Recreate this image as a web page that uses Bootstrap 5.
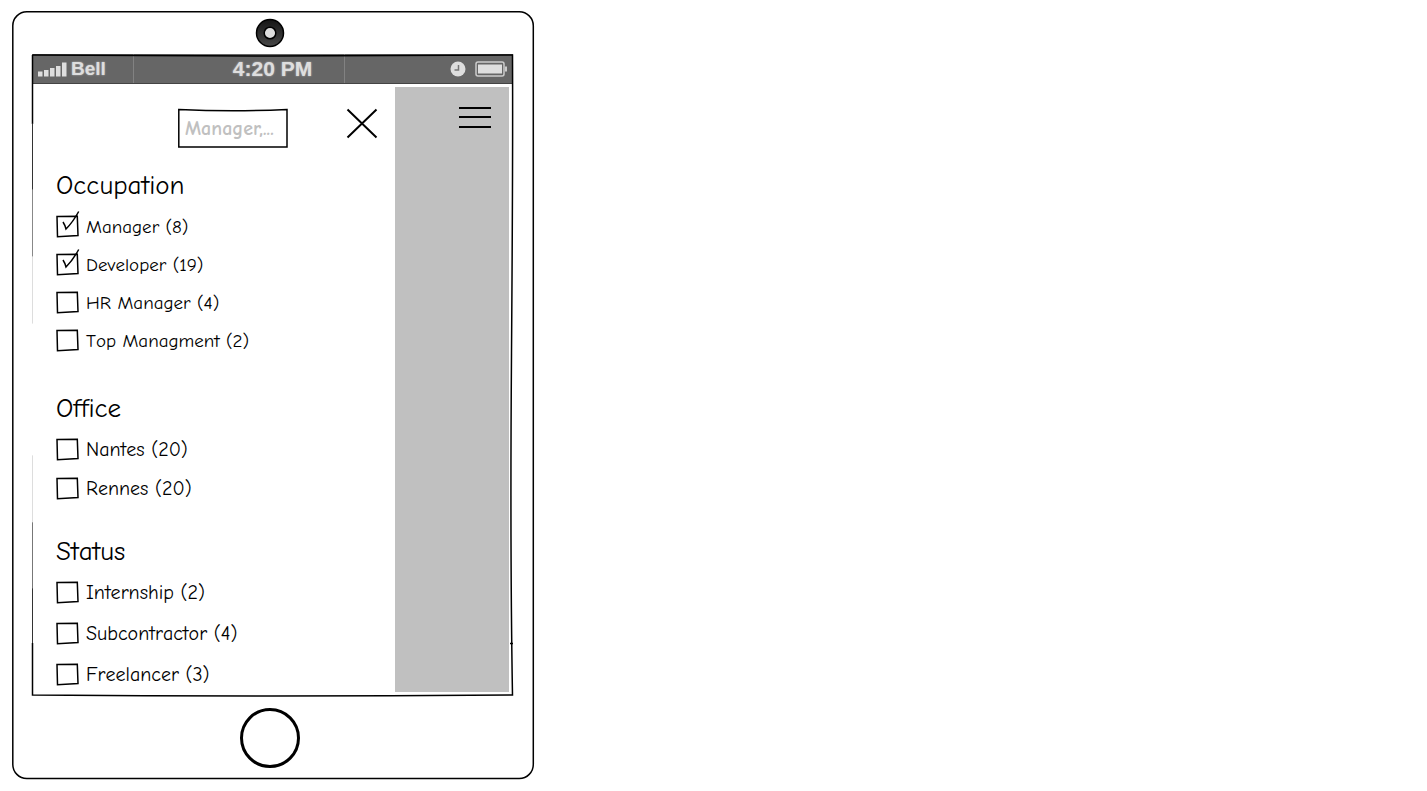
<!DOCTYPE html>
<html lang="en">
<head>
<meta charset="utf-8">
<meta name="viewport" content="width=device-width, initial-scale=1">
<title>Directory filters</title>
<link href="https://cdn.jsdelivr.net/npm/bootstrap@5.3.0/dist/css/bootstrap.min.css" rel="stylesheet">
<style>
  body { background: #fff; color: #000; font-family: "Comic Sans MS", "Comic Neue", Lato, sans-serif; font-kerning: none; }
  .device { max-width: 522px; margin: 11px 12px; padding: 0 21px 0 20px; }
  .sketch { position: absolute; inset: 0; width: 100%; height: 100%; overflow: visible; pointer-events: none; fill: none; stroke: #000; stroke-width: 1.5; }
  .sketch * { vector-effect: non-scaling-stroke; }
  .camera-row { height: 43px; padding-right: 5px; }
  .home-row { height: 84px; padding: 0 5px 2px 0; }
  .home-btn { width: 60px; height: 60px; border: 3px solid #000; border-radius: 50%; background: #fff; }
  .status-bar { display: grid; grid-template-columns: 1fr auto 1fr; height: 30px; padding: 0 5px; color: #dedede; border-bottom: 1px solid #444;
    background: linear-gradient(#828282, #828282) 21% 0 / 1px 100% no-repeat, linear-gradient(#828282, #828282) 65% 0 / 1px 100% no-repeat, #666;
    font-family: "Liberation Sans", Arial, sans-serif; font-weight: 700; font-size: 19px; line-height: 30px; text-shadow: 0 0 2px #bbb; }
  .clock-text { font-size: 21px; }
  .drawer { padding: 24px 17px 0 24px; }
  .backdrop-pane { width: 114px; margin: 3px 4px 3px 0; background: #c0c0c0; }
  .search-wrap { width: 110px; height: 40px; margin-right: 58px; }
  .search-box { width: 100%; height: 40px; padding: 0 7px; border: 0; background: transparent; font-size: 20px; font-weight: 700; }
  .search-box::placeholder { color: #c0c0c0; opacity: 1; }
  .plain-btn { padding: 0; border: 0; background: none; line-height: 0; }
  .group-title { margin: 0 0 5px; font-size: 27px; line-height: 32px; font-weight: 400; }
  .group-occupation { margin-top: 22px; --row: 38px; --label: 19px; }
  .group-occupation .group-title { margin-bottom: 6px; }
  .group-office { margin-top: 33px; --row: 39px; --label: 20px; }
  .group-status { margin-top: 28px; --row: 41px; --label: 20px; }
  .group-status .group-title { margin-bottom: 4px; }
  .option { height: var(--row); font-size: var(--label); line-height: 24px; gap: 6px; }
  .tick { appearance: none; width: 24px; height: 32px; margin: 0; flex: none;
    background: url("data:image/svg+xml,%3Csvg xmlns='http://www.w3.org/2000/svg' viewBox='0 0 24 32'%3E%3Cpath d='M1 5.5L21.3 5.3L22 24.500L1.5 25.8Z' fill='none' stroke='%23000' stroke-width='1.5'/%3E%3C/svg%3E") no-repeat; }
  .tick:checked { background-image: url("data:image/svg+xml,%3Csvg xmlns='http://www.w3.org/2000/svg' viewBox='0 0 24 32'%3E%3Cpath d='M1 5.5L21.3 5.3L22 24.500L1.5 25.8Z M7 11Q9 14 10 18Q17 11 22.7 .5' fill='none' stroke='%23000' stroke-width='1.5'/%3E%3C/svg%3E"); }
</style>
</head>
<body>
<div class="device position-relative">
  <svg class="sketch" viewBox="0 0 522 769" preserveAspectRatio="none" aria-hidden="true"><rect x=".8" y=".8" width="520.5" height="767.7" rx="14"/></svg>

  <div class="camera-row d-flex justify-content-center align-items-center">
    <svg width="30" height="30" viewBox="0 0 30 30" aria-hidden="true">
      <defs><linearGradient id="lens" x2="0" y2="1"><stop stop-color="#151515"/><stop offset="1" stop-color="#484848"/></linearGradient></defs>
      <circle cx="15" cy="15" r="13.5" fill="url(#lens)" stroke="#000" stroke-width="1.5"/>
      <circle cx="15" cy="15" r="5.8" fill="#ddd" stroke="#000" stroke-width="1.5"/>
    </svg>
  </div>

  <div class="position-relative">
    <header class="status-bar">
      <div class="d-flex align-items-center gap-1">
        <svg width="30" height="16" viewBox="0 0 30 16" fill="#dedede" aria-hidden="true"><path d="M1 10.500h4.500v5H1zM7 9h4.500v6.500H7zM13 7h4.500v8.500h-4.500zM19 5h4.500v10.500h-4.500zM25 1.500h4.500v14h-4.500z"/></svg>
        <span>Bell</span>
      </div>
      <div class="clock-text">4:20 PM</div>
      <div class="d-flex align-items-center justify-content-end gap-2">
        <svg width="16" height="16" viewBox="0 0 16 16" aria-hidden="true"><circle cx="8" cy="8" r="7.500" fill="#dedede"/><path d="M8.500 4v5H4.500" fill="none" stroke="#777" stroke-width="1.500"/></svg>
        <svg width="34" height="16" viewBox="0 0 34 16" aria-hidden="true"><rect x="2" y="1" width="28" height="14" rx="2" fill="none" stroke="#ccc" stroke-width="1.500"/><rect x="4" y="3.500" width="24" height="9" fill="#dedede"/><path d="M31 5.500h2v5h-2z" fill="#ccc"/></svg>
      </div>
    </header>

    <main class="d-flex">
      <form class="drawer flex-grow-1">
        <div class="d-flex justify-content-end align-items-start">
          <div class="search-wrap position-relative">
            <svg class="sketch" viewBox="0 0 110 40" preserveAspectRatio="none" aria-hidden="true"><path d="M.8 1.500Q55 4 109 1.500V39H.8Z"/></svg>
            <input class="search-box" type="text" placeholder="Manager,..." aria-label="Search">
          </div>
          <button class="plain-btn" type="button" aria-label="Close">
            <svg width="32" height="32" viewBox="0 0 32 32" stroke="#000" stroke-width="2"><path d="M1.500 1.500L30.500 29.500M30.500 1.500L1.500 29.500"/></svg>
          </button>
        </div>

        <section class="group-occupation">
          <h2 class="group-title">Occupation</h2>
          <label class="option d-flex align-items-center"><input class="tick" type="checkbox" checked>Manager (8)</label>
          <label class="option d-flex align-items-center"><input class="tick" type="checkbox" checked>Developer (19)</label>
          <label class="option d-flex align-items-center"><input class="tick" type="checkbox">HR Manager (4)</label>
          <label class="option d-flex align-items-center"><input class="tick" type="checkbox">Top Managment (2)</label>
        </section>
        <section class="group-office">
          <h2 class="group-title">Office</h2>
          <label class="option d-flex align-items-center"><input class="tick" type="checkbox">Nantes (20)</label>
          <label class="option d-flex align-items-center"><input class="tick" type="checkbox">Rennes (20)</label>
        </section>
        <section class="group-status">
          <h2 class="group-title">Status</h2>
          <label class="option d-flex align-items-center"><input class="tick" type="checkbox">Internship (2)</label>
          <label class="option d-flex align-items-center"><input class="tick" type="checkbox">Subcontractor (4)</label>
          <label class="option d-flex align-items-center"><input class="tick" type="checkbox">Freelancer (3)</label>
        </section>
      </form>
      <aside class="backdrop-pane d-flex justify-content-end align-items-start pt-3 pe-3">
        <button class="plain-btn" type="button" aria-label="Menu">
          <svg width="36" height="28" viewBox="0 0 36 28" stroke="#000" stroke-width="2"><path d="M2 5h32M2 14h32M2 24h32"/></svg>
        </button>
      </aside>
    </main>

    <svg class="sketch" viewBox="0 0 481 642" preserveAspectRatio="none" aria-hidden="true">
      <path d="M.5 1Q120 2 240 2T480.500 1Q481 100 479.500 300T480.500 642Q240 644 .5 642V590M478 590.500h3"/>
      <path d="M.5 1V70"/>
      <path d="M.5 70V136" stroke="#333" stroke-width="1"/>
      <path d="M.5 136V203" stroke="#888" stroke-width="1"/>
      <path d="M.5 203V270" stroke="#ddd" stroke-width="1"/>
      <path d="M.5 402V469" stroke="#ddd" stroke-width="1"/>
      <path d="M.5 469V535" stroke="#777" stroke-width="1"/>
      <path d="M.5 535V590" stroke="#333" stroke-width="1"/>
    </svg>
  </div>

  <footer class="home-row d-flex justify-content-center align-items-center pt-1"><button class="home-btn" type="button" aria-label="Home"></button></footer>
</div>
<script src="https://cdn.jsdelivr.net/npm/bootstrap@5.3.0/dist/js/bootstrap.bundle.min.js"></script>
</body>
</html>
